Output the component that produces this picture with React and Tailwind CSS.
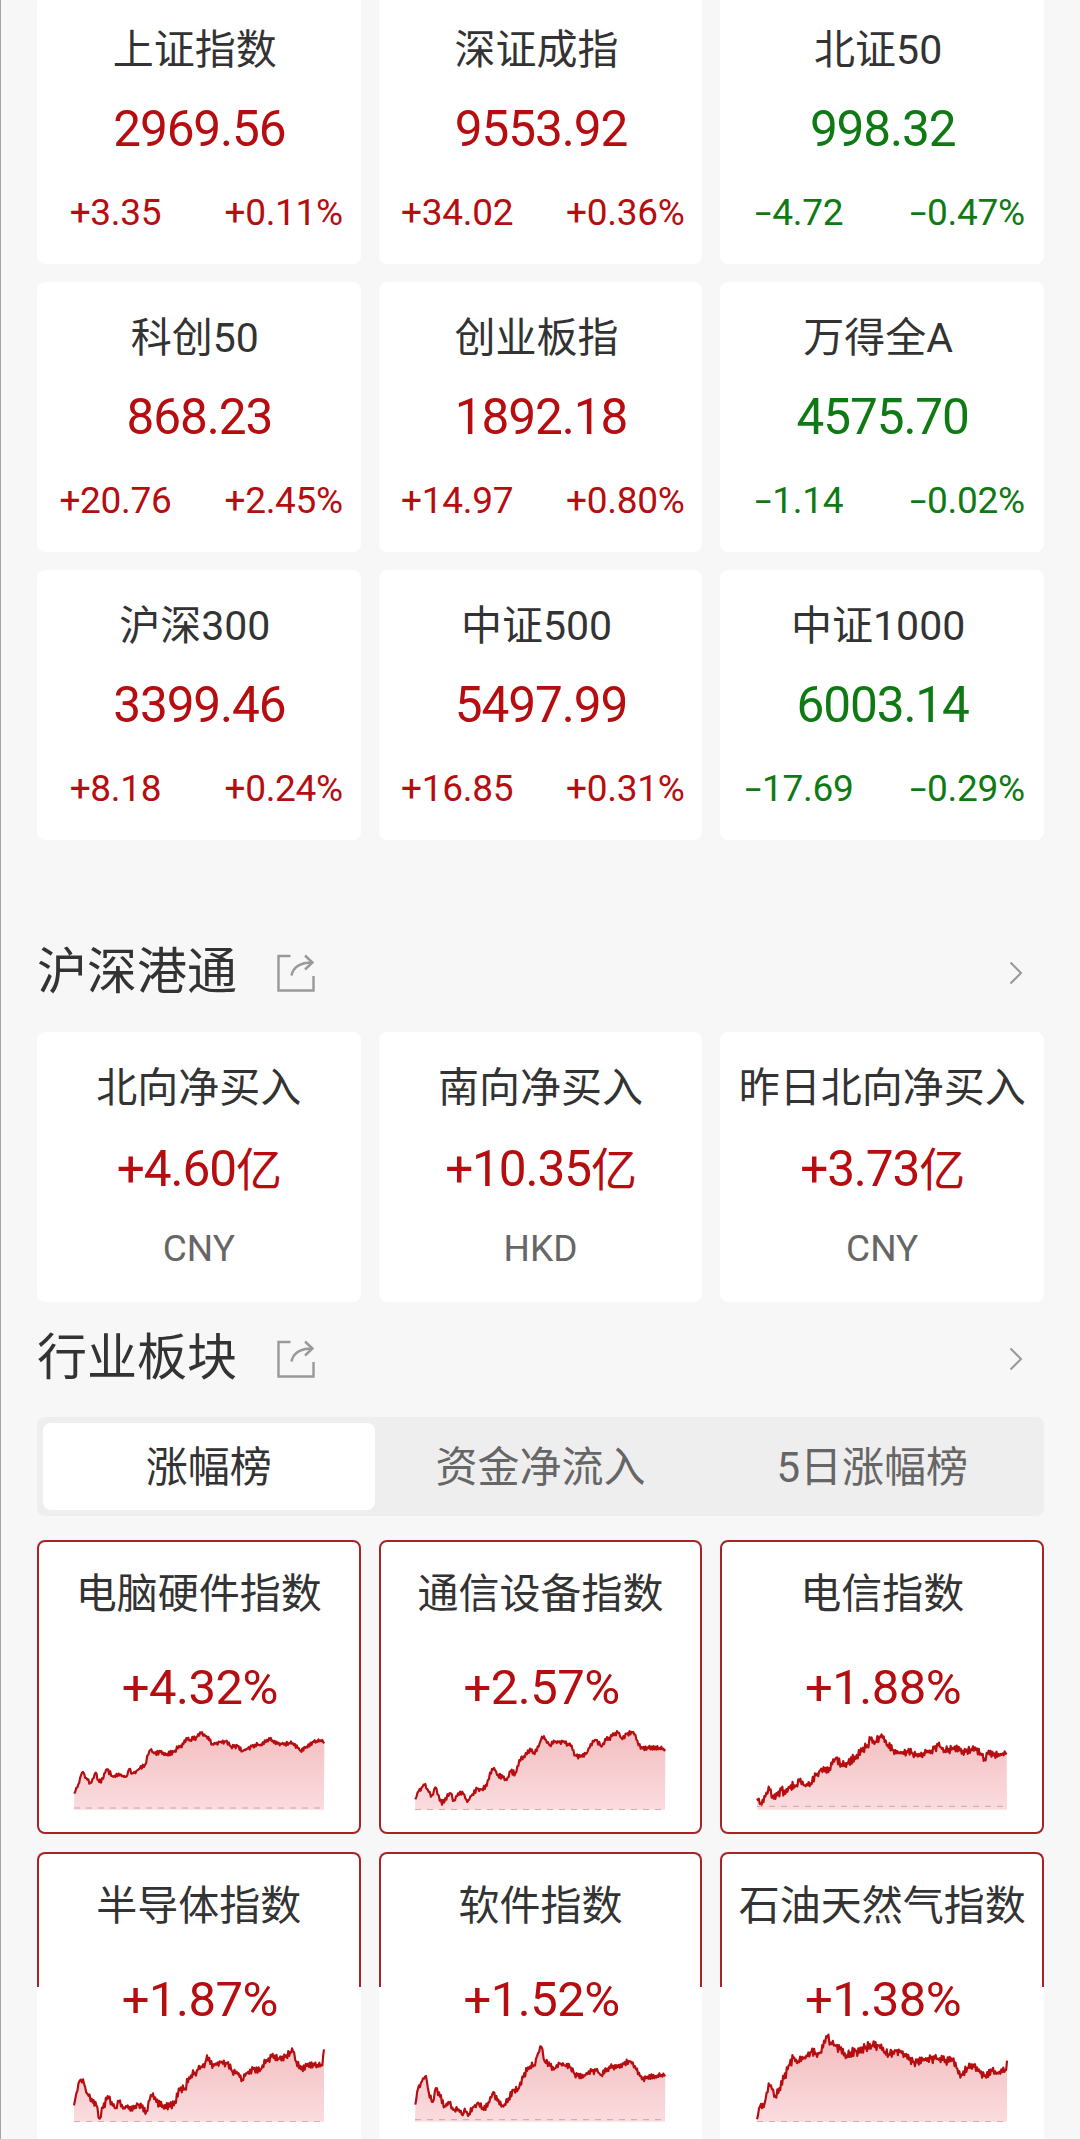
import React from 'react';

const INDEXES = [
    { name: '上证指数', value: '2969.56', diff: '+3.35', pct: '+0.11%' },
    { name: '深证成指', value: '9553.92', diff: '+34.02', pct: '+0.36%' },
    { name: '北证50', value: '998.32', diff: '-4.72', pct: '-0.47%' },
    { name: '科创50', value: '868.23', diff: '+20.76', pct: '+2.45%' },
    { name: '创业板指', value: '1892.18', diff: '+14.97', pct: '+0.80%' },
    { name: '万得全A', value: '4575.70', diff: '-1.14', pct: '-0.02%' },
    { name: '沪深300', value: '3399.46', diff: '+8.18', pct: '+0.24%' },
    { name: '中证500', value: '5497.99', diff: '+16.85', pct: '+0.31%' },
    { name: '中证1000', value: '6003.14', diff: '-17.69', pct: '-0.29%' },
];

const FLOWS = [
    { name: '北向净买入', value: '+4.60', currency: 'CNY' },
    { name: '南向净买入', value: '+10.35', currency: 'HKD' },
    { name: '昨日北向净买入', value: '+3.73', currency: 'CNY' },
];

const TABS = ['涨幅榜', '资金净流入', '5日涨幅榜'];

// points: x,y pairs in a 756x282 box, base: y of the dashed previous-close line
const SECTORS = [
    {
        name: '电脑硬件指数', pct: '+4.32%', base: 276, noise: 7,
        points: [[4, 233], [16, 205], [24, 178], [30, 168], [40, 186], [52, 200], [62, 186], [68, 170], [76, 192], [84, 200], [94, 172], [102, 160], [118, 180], [140, 178], [160, 182], [168, 160], [178, 172], [200, 158], [216, 146], [226, 116], [232, 102], [244, 112], [262, 108], [282, 114], [302, 108], [318, 90], [326, 94], [340, 66], [352, 72], [370, 64], [384, 52], [400, 60], [418, 84], [440, 78], [458, 76], [474, 92], [494, 90], [508, 106], [524, 98], [546, 86], [566, 88], [588, 66], [602, 80], [626, 84], [660, 82], [674, 96], [682, 104], [700, 92], [722, 78], [748, 72], [754, 82]],
    },
    {
        name: '通信设备指数', pct: '+2.57%', base: 281, noise: 8,
        points: [[4, 250], [14, 226], [26, 212], [34, 204], [44, 228], [54, 238], [64, 214], [74, 238], [84, 266], [94, 246], [110, 232], [120, 254], [132, 232], [148, 234], [160, 258], [172, 240], [190, 218], [204, 220], [218, 210], [228, 170], [240, 156], [252, 176], [266, 184], [278, 192], [290, 166], [304, 172], [316, 132], [332, 124], [348, 98], [362, 114], [374, 92], [384, 62], [396, 72], [408, 88], [422, 78], [450, 76], [470, 90], [484, 118], [504, 122], [518, 112], [530, 84], [546, 72], [562, 92], [576, 72], [594, 60], [612, 50], [622, 66], [638, 54], [658, 48], [670, 74], [680, 98], [700, 94], [736, 96], [754, 100]],
    },
    {
        name: '电信指数', pct: '+1.88%', base: 271, noise: 13,
        points: [[3, 248], [14, 262], [28, 242], [38, 212], [50, 240], [64, 238], [76, 222], [88, 234], [104, 208], [118, 212], [130, 196], [146, 208], [164, 202], [180, 178], [196, 158], [206, 166], [220, 156], [240, 126], [256, 144], [276, 142], [296, 122], [318, 106], [334, 88], [344, 70], [358, 78], [370, 62], [380, 66], [392, 88], [412, 102], [432, 112], [452, 106], [470, 112], [486, 122], [502, 112], [526, 104], [546, 88], [566, 104], [590, 96], [620, 104], [660, 102], [674, 112], [686, 128], [698, 104], [712, 118], [734, 114], [752, 110]],
    },
    {
        name: '半导体指数', pct: '+1.87%', base: 281, noise: 12,
        points: [[3, 232], [10, 196], [20, 158], [30, 154], [40, 194], [56, 212], [70, 232], [80, 272], [90, 240], [104, 204], [116, 222], [128, 240], [138, 222], [150, 242], [164, 232], [178, 248], [192, 226], [206, 238], [220, 250], [230, 216], [240, 196], [250, 222], [270, 232], [290, 236], [306, 220], [320, 186], [336, 182], [348, 148], [366, 134], [384, 116], [394, 118], [402, 82], [412, 108], [424, 112], [440, 100], [462, 106], [478, 130], [494, 138], [508, 154], [522, 136], [544, 120], [560, 130], [580, 96], [596, 86], [616, 92], [640, 82], [660, 70], [670, 102], [684, 124], [704, 108], [724, 112], [748, 112], [753, 64]],
    },
    {
        name: '软件指数', pct: '+1.52%', base: 275, noise: 10,
        points: [[4, 230], [12, 182], [24, 160], [36, 144], [44, 192], [56, 222], [66, 180], [78, 206], [92, 234], [106, 226], [118, 246], [134, 244], [146, 262], [152, 242], [162, 264], [176, 238], [192, 224], [206, 240], [220, 236], [238, 192], [250, 218], [268, 236], [284, 210], [298, 186], [312, 184], [328, 148], [342, 118], [360, 112], [372, 76], [382, 56], [392, 100], [408, 114], [422, 122], [434, 104], [450, 112], [470, 118], [482, 138], [508, 148], [524, 130], [546, 128], [562, 142], [586, 116], [606, 120], [626, 106], [650, 100], [666, 124], [684, 154], [700, 146], [724, 144], [754, 140]],
    },
    {
        name: '石油天然气指数', pct: '+1.38%', base: 281, noise: 14,
        points: [[3, 274], [12, 236], [26, 226], [38, 166], [48, 184], [58, 204], [70, 180], [84, 152], [98, 112], [112, 90], [126, 100], [142, 92], [166, 72], [180, 76], [196, 74], [204, 38], [214, 28], [224, 44], [240, 54], [252, 64], [272, 82], [284, 74], [298, 68], [310, 74], [330, 56], [350, 54], [370, 52], [384, 74], [398, 80], [420, 68], [440, 70], [454, 92], [474, 102], [500, 98], [516, 90], [536, 92], [560, 96], [590, 98], [604, 122], [616, 140], [634, 120], [654, 116], [672, 134], [688, 142], [708, 128], [724, 134], [748, 126], [753, 98]],
    },
];

// fills the gaps between the points with small repeatable tick noise
const buildLine = (points, noise) => {
    const out = [];
    const last = points[points.length - 1];
    let n = 0;
    for (let i = 0; i < points.length - 1; i++) {
        const [x1, y1] = points[i];
        const [x2, y2] = points[i + 1];
        const steps = Math.max(1, Math.round((x2 - x1) / 3));
        for (let s = 0; s < steps; s++) {
            const rnd = Math.abs(Math.sin((n + 1) * 12.9898) * 43758.5453) % 1;
            const sign = n % 2 ? 1 : -1;
            const x = x1 + ((x2 - x1) * s) / steps;
            const y = y1 + ((y2 - y1) * s) / steps + (s ? sign * rnd * noise : 0);
            out.push(`${x.toFixed(1)},${y.toFixed(1)}`);
            n++;
        }
    }
    out.push(last.join(','));
    return out.join(' ');
};

const Sparkline = ({ id, points, noise, base }) => {
    const line = buildLine(points, noise);
    return (
        <svg className="w-[252px] h-[94px]" viewBox="0 0 756 282" fill="none">
            <defs>
                <linearGradient id={id} x1="0" y1="0" x2="0" y2="282" gradientUnits="userSpaceOnUse">
                    <stop offset="0.2" stopColor="#f4c0c2" />
                    <stop offset="1" stopColor="#fadcdf" />
                </linearGradient>
            </defs>
            <polygon points={`3,281 ${line} 753,281`} fill={`url(#${id})`} />
            <line x1="3" y1={base} x2="753" y2={base} stroke="#c9a3ad" strokeWidth="3" strokeDasharray="18 18" />
            <polyline points={line} stroke="#b50d10" strokeWidth="6.5" strokeLinejoin="round" />
        </svg>
    );
};

const ShareIcon = () => (
    <svg className="w-[38px] h-[38px] ml-10" viewBox="0 0 38 38" fill="none" stroke="#999" strokeWidth="2.4">
        <path d="M13.5 2H1.5V36.5H36.5V22" />
        <path d="M14.5 21.5C16 14 22 8.5 35.5 8.5" />
        <path d="M28 1.5L35.5 8.5L28 15.5" />
    </svg>
);

const SectionHeader = ({ title }) => (
    <div className="flex items-center h-[60px] pr-[21px]">
        <h2 className="text-[50px] leading-[60px] -mt-[2px] text-[#333]">{title}</h2>
        <ShareIcon />
        <svg className="w-[14px] h-[24px] ml-auto" viewBox="0 0 14 24" fill="none" stroke="#999" strokeWidth="2">
            <path d="M1.5 1.5L12 12L1.5 22.5" />
        </svg>
    </div>
);

// Roboto's hyphen is too short for a minus sign, so it gets stretched
const Signed = ({ text }) => {
    if (!text.startsWith('-')) return text;
    return (
        <>
            <span className="inline-block w-[18px] scale-x-160">-</span>
            {text.slice(1)}
        </>
    );
};

const IndexCard = ({ name, value, diff, pct }) => {
    const color = pct.startsWith('-') ? 'text-[#0f7a14]' : 'text-[#b50d10]';
    return (
        <div className="h-[270px] bg-white rounded-lg pt-[31px] text-center">
            <div className="h-[50px] leading-[50px] text-[41px] text-[#333] pr-2">{name}</div>
            <div className={`h-[60px] leading-[60px] mt-6 text-[49.5px] tracking-[-1.1px] pl-px ${color}`}>{value}</div>
            <div className={`flex justify-between h-[44px] leading-[44px] mt-8 text-[37px] tracking-[-0.3px] ${color}`}>
                <span className="w-[157px]"><Signed text={diff} /></span>
                <span className="w-[154px]"><Signed text={pct} /></span>
            </div>
        </div>
    );
};

const FlowCard = ({ name, value, currency }) => (
    <div className="h-[270px] bg-white rounded-lg pt-[31px] text-center whitespace-nowrap">
        <div className="h-[50px] leading-[50px] text-[41px] text-[#333]">{name}</div>
        <div className="h-[60px] leading-[60px] mt-[26px] text-[49.5px] tracking-[-1.1px] text-[#b50d10]">
            {value}<span className="text-[46px]">亿</span>
        </div>
        <div className="h-[44px] leading-[44px] mt-[28px] text-[37px] text-[#666]">{currency}</div>
    </div>
);

const SectorCard = ({ sector, id, cut }) => (
    <div className="relative h-[294px] bg-white rounded-lg pt-[29px] text-center whitespace-nowrap">
        {/* Frame sits on its own layer, the last row only has its upper part */}
        <div
            className={
                cut
                    ? 'absolute inset-x-0 top-0 h-[135px] border-2 border-b-0 border-[#a82226] rounded-t-lg'
                    : 'absolute inset-0 border-2 border-[#a82226] rounded-lg'
            }
        ></div>
        <div className="h-[50px] leading-[50px] text-[41px] text-[#333]">{sector.name}</div>
        <div className="h-[60px] leading-[60px] mt-[39px] text-[49px] tracking-[-0.5px] pl-[2px] text-[#b50d10]">{sector.pct}</div>
        <div className="flex justify-center -mt-[2px]">
            <Sparkline id={id} points={sector.points} noise={sector.noise} base={sector.base} />
        </div>
    </div>
);

const App = () => {
    return (
        <div className="w-[1080px] h-[2139px] overflow-hidden bg-[#f7f7f7] border-l border-[#a3a3a3] font-['Roboto','Noto_Sans_CJK_SC',sans-serif]">
            <div className="pl-9 pr-9">
                <div className="grid grid-cols-3 gap-[18px] -mt-[6px]">
                    {INDEXES.map((item) => (
                        <IndexCard key={item.name} {...item} />
                    ))}
                </div>

                <section className="mt-[103px]">
                    <SectionHeader title="沪深港通" />
                    <div className="grid grid-cols-3 gap-[18px] mt-[29px]">
                        {FLOWS.map((item) => (
                            <FlowCard key={item.name} {...item} />
                        ))}
                    </div>
                </section>

                <section className="mt-[27px]">
                    <SectionHeader title="行业板块" />
                    <div className="flex h-[99px] mt-7 p-[6px] bg-[#eee] rounded-lg">
                        {TABS.map((tab, i) => (
                            <button
                                key={tab}
                                className={`flex-1 pt-[2px] text-[42px] leading-[50px] rounded-lg ${i === 0 ? 'bg-white text-[#333]' : 'text-[#666]'}`}
                            >
                                {tab}
                            </button>
                        ))}
                    </div>
                    <div className="grid grid-cols-3 gap-[18px] mt-6">
                        {SECTORS.map((sector, i) => (
                            <SectorCard key={sector.name} sector={sector} id={`fill-${i}`} cut={i > 2} />
                        ))}
                    </div>
                </section>
            </div>
        </div>
    );
};

export default App;
